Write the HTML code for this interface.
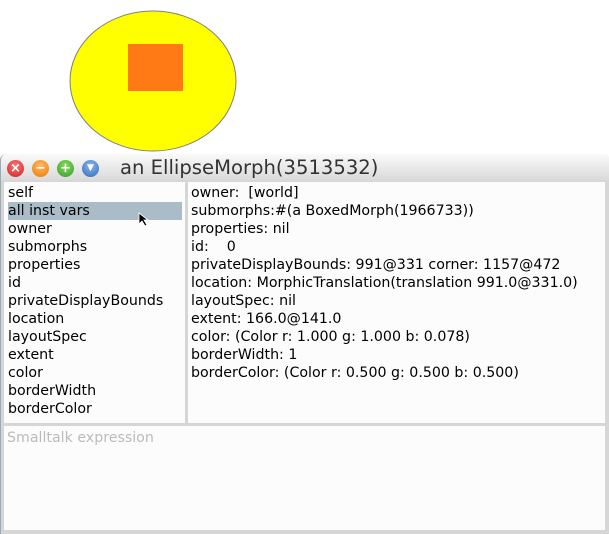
<!DOCTYPE html>
<html><head><style>
body{margin:0;width:609px;height:534px;background:#fff;position:relative;overflow:hidden;font-family:"DejaVu Sans","Liberation Sans",sans-serif;}
.win{position:absolute;left:0;top:154px;width:609px;height:380px;background:linear-gradient(#fafafa,#dadada 26px,#d6d6d6 27px);border-radius:6px 6px 0 0;border-left:1px solid #9ab;}
.title{position:absolute;left:120px;top:156px;font-size:19.6px;color:#333;}
.btn{position:absolute;top:160px;width:17px;height:17px;border-radius:50%;color:#fff;font-size:13px;font-weight:bold;text-align:center;line-height:17px;}
.pane{position:absolute;background:#fcfcfc;font-size:14.2px;color:#000;}
.l div{height:18px;line-height:18px;padding-left:0;margin-left:4px;width:174px;white-space:nowrap;}
.r div{height:18px;line-height:18px;padding-left:3px;white-space:pre;}
</style></head><body>
<svg style="position:absolute;left:0;top:0" width="609" height="160">
<ellipse cx="153" cy="81" rx="83" ry="70" fill="#ffff00" stroke="#808080"/>
<rect x="128" y="44" width="55" height="47" fill="#ff7a14"/>
</svg>
<div class="win"></div>
<div class="btn" style="left:7px;background:radial-gradient(circle at 50% 35%,#f77,#c22)">×</div>
<div class="btn" style="left:32px;background:radial-gradient(circle at 50% 35%,#fb6,#e70)">−</div>
<div class="btn" style="left:57px;background:radial-gradient(circle at 50% 35%,#8d5,#393)">+</div>
<div class="btn" style="left:82px;background:radial-gradient(circle at 50% 35%,#8be,#36b);font-size:9px">▼</div>
<div class="title">an EllipseMorph(3513532)</div>
<div class="pane l" style="left:4px;top:182px;width:181px;height:241px;padding-top:2px;box-sizing:border-box">
<div>self</div><div style="background:#a9bcc8">all inst vars</div><div>owner</div><div>submorphs</div><div>properties</div><div>id</div><div>privateDisplayBounds</div><div>location</div><div>layoutSpec</div><div>extent</div><div>color</div><div>borderWidth</div><div>borderColor</div>
</div>
<div class="pane r" style="left:188px;top:182px;width:417px;height:241px;padding-top:2px;box-sizing:border-box">
<div>owner:  [world]</div><div>submorphs:#(a BoxedMorph(1966733))</div><div>properties: nil</div><div>id:    0</div><div>privateDisplayBounds: 991@331 corner: 1157@472</div><div>location: MorphicTranslation(translation 991.0@331.0)</div><div>layoutSpec: nil</div><div>extent: 166.0@141.0</div><div>color: (Color r: 1.000 g: 1.000 b: 0.078)</div><div>borderWidth: 1</div><div>borderColor: (Color r: 0.500 g: 0.500 b: 0.500)</div>
</div>
<div class="pane" style="left:4px;top:426px;width:601px;height:104px;color:#bbb;padding:4px 0 0 3px;box-sizing:border-box">Smalltalk expression</div>
<svg style="position:absolute;left:138px;top:212px" width="12" height="16"><path d="M1 1 L1 12 L4 9 L7 14 L9 13 L6 8 L10 8 Z" fill="#000" stroke="#fff" stroke-width="0.8"/></svg>
</body></html>
